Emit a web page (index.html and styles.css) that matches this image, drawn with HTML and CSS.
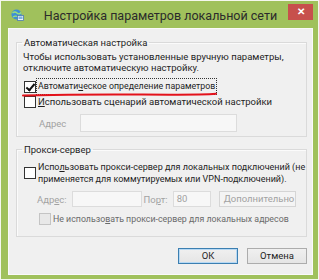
FILE: index.html
```html
<!DOCTYPE html>
<html lang="ru">
<head>
    <meta charset="UTF-8">
    <title>Настройка параметров локальной сети</title>
    <link rel="stylesheet" href="styles.css">
</head>
<body>
    <div class="window">
        <div class="titlebar">
            <svg class="app-icon" width="13" height="13" viewBox="0 0 13 13">
                <circle cx="5.5" cy="5.5" r="5" fill="#3d8fd6"/>
                <path d="M1.5 4 Q4 2 6 4 T10 3.5 M2 8 Q5 6 8 8.5" stroke="#9fe07a" stroke-width="1.4" fill="none"/>
                <rect x="6.5" y="6.5" width="6" height="5" fill="#e9f1f8" stroke="#4a7bb0" stroke-width="0.8"/>
                <rect x="7.5" y="7.5" width="4" height="2.5" fill="#7fb3e0"/>
            </svg>
            <div class="title">Настройка параметров локальной сети</div>
            <div class="close">✕</div>
        </div>

        <div class="content">
            <fieldset class="group group-auto">
                <legend>Автоматическая настройка</legend>
                <p class="hint">Чтобы использовать установленные вручную параметры,<br>отключите автоматическую настройку.</p>
                <label class="check-row">
                    <span class="box checked"></span>
                    <span class="focus">Автомати<u>ч</u>еское определение параметров</span>
                </label>
                <label class="check-row">
                    <span class="box"></span>
                    <span><u>И</u>спользовать сценарий автоматической настройки</span>
                </label>
                <div class="addr-row">
                    <span class="muted">А<u>д</u>рес</span>
                    <span class="field wide"></span>
                </div>
                <svg class="mark" width="200" height="6" viewBox="0 0 200 6">
                    <path d="M1 3.5 Q60 2.2 120 2.6 T194 1.8" stroke="#e3121b" stroke-width="2" fill="none" stroke-linecap="round"/>
                </svg>
            </fieldset>

            <fieldset class="group group-proxy">
                <legend>Прокси-сервер</legend>
                <label class="check-row multi">
                    <span class="box"></span>
                    <span>Испо<u>л</u>ьзовать прокси-сервер для локальных подключений (не<br>применяется для коммутируемых или VPN-подключений).</span>
                </label>
                <div class="proxy-row">
                    <span class="muted">Адр<u>е</u>с:</span>
                    <span class="field addr"></span>
                    <span class="muted">По<u>р</u>т:</span>
                    <span class="field port">80</span>
                    <span class="btn disabled"><u>Д</u>ополнительно</span>
                </div>
                <label class="check-row sub">
                    <span class="box disabled"></span>
                    <span class="dim">Не использо<u>в</u>ать прокси-сервер для локальных адресов</span>
                </label>
            </fieldset>

            <div class="buttons">
                <span class="btn default">ОК</span>
                <span class="btn">Отмена</span>
            </div>
        </div>
    </div>
</body>
</html>
```

FILE: styles.css
```css
/* General */
body {
    margin: 0;
    background: #f4f7ee;
    font-family: Roboto, "Noto Sans", sans-serif;
    font-size: 9.5px;
    color: #1e1e1e;
}

u {
    text-decoration-thickness: 1px;
    text-underline-offset: 1px;
}

/* Window frame */
.window {
    box-sizing: border-box;
    width: 317px;
    height: 278px;
    margin: 1px;
    padding: 0 5px 4px 7px;
    background: #a0c15c;
    display: flex;
    flex-direction: column;
}

.titlebar {
    height: 27px;
    flex: none;
    display: grid;
    grid-template-columns: 1fr auto 1fr;
    align-items: center;
}

.app-icon {
    margin: 1px 0 0 3px;
}

.title {
    font-size: 12.5px;
    color: #2b2b2b;
    padding-top: 1px;
}

.close {
    justify-self: end;
    align-self: start;
    margin-top: 3px;
    width: 25px;
    height: 16px;
    background: #c7504c;
    color: #fff;
    font-size: 10px;
    font-weight: bold;
    line-height: 16px;
    text-align: center;
}

/* Dialog body */
.content {
    flex: 1;
    min-height: 0;
    background: #f0f0f0;
    box-shadow: inset 0 0 0 1px #fafafa;
    padding-top: 7px;
    display: flex;
    flex-direction: column;
}

.group {
    position: relative;
    margin: 0 6px 0 8px;
    padding: 0 6px 4px 7px;
    border: 1px solid #dadada;
    box-shadow: inset 1px 1px 0 #fbfbfb;
    min-width: 0;
}

.group legend {
    margin-left: -2px;
    padding: 0 2px;
    line-height: 15px;
}

.hint {
    margin: 1px 0 0 -1px;
    line-height: 11px;
}

.check-row {
    display: flex;
    align-items: center;
    height: 15px;
    gap: 2px;
    white-space: nowrap;
}

.group-auto .check-row:first-of-type {
    margin-top: 6px;
}

.box {
    box-sizing: border-box;
    flex: none;
    width: 12px;
    height: 12px;
    border: 1px solid #333;
    background: #fff;
    position: relative;
}

.box.checked::after {
    content: "";
    position: absolute;
    left: 3px;
    top: 0;
    width: 3px;
    height: 7px;
    border: solid #111;
    border-width: 0 2px 2px 0;
    transform: rotate(40deg);
}

.box.disabled {
    border-color: #c4c4c4;
    background: #e8e8e8;
}

.focus {
    outline: 1px dotted #333;
    outline-offset: 1px;
    line-height: 13px;
    font-size: 8.8px;
}

.addr-row {
    display: flex;
    align-items: center;
    margin-top: 5px;
    padding-left: 15px;
    gap: 14px;
}

.muted {
    color: #a2a2a2;
}

.dim {
    color: #6a6a6a;
}

.field {
    box-sizing: border-box;
    height: 18px;
    border: 1px solid #dcdcdc;
    background: #f7f7f7;
    color: #a2a2a2;
    padding-left: 3px;
    line-height: 16px;
}

.field.wide {
    width: 157px;
}

.mark {
    position: absolute;
    left: 5px;
    top: 42px;
}

/* Proxy group */
.group-proxy {
    margin-top: 5px;
    padding-bottom: 10px;
}

.check-row.multi {
    height: auto;
    margin-top: 4px;
    line-height: 12px;
    font-size: 9px;
}

.proxy-row {
    display: flex;
    align-items: center;
    margin-top: 6px;
    padding-left: 13px;
    height: 16px;
}

.proxy-row .field {
    height: 16px;
    line-height: 14px;
}

.field.addr {
    width: 70px;
    margin: 0 2px 0 5px;
}

.field.port {
    width: 38px;
    margin: 0 8px 0 5px;
}

.check-row.sub {
    margin-top: 4px;
    padding-left: 15px;
    font-size: 8.8px;
}

/* Buttons */
.btn {
    box-sizing: border-box;
    display: inline-block;
    height: 16px;
    border: 1px solid #acacac;
    background: linear-gradient(#f0f0f0, #e5e5e5);
    text-align: center;
    line-height: 14px;
    padding: 0 4px;
}

.btn.disabled {
    border-color: #d5d5d5;
    background: #f4f4f4;
    color: #a2a2a2;
    width: 77px;
}

.btn.default {
    border-color: #3c7fb1;
    box-shadow: inset 0 0 0 1px #b7d9f4;
}

.buttons {
    display: flex;
    justify-content: flex-end;
    gap: 9px;
    margin: 11px 6px 0 0;
}

.buttons .btn {
    width: 60px;
}
```
